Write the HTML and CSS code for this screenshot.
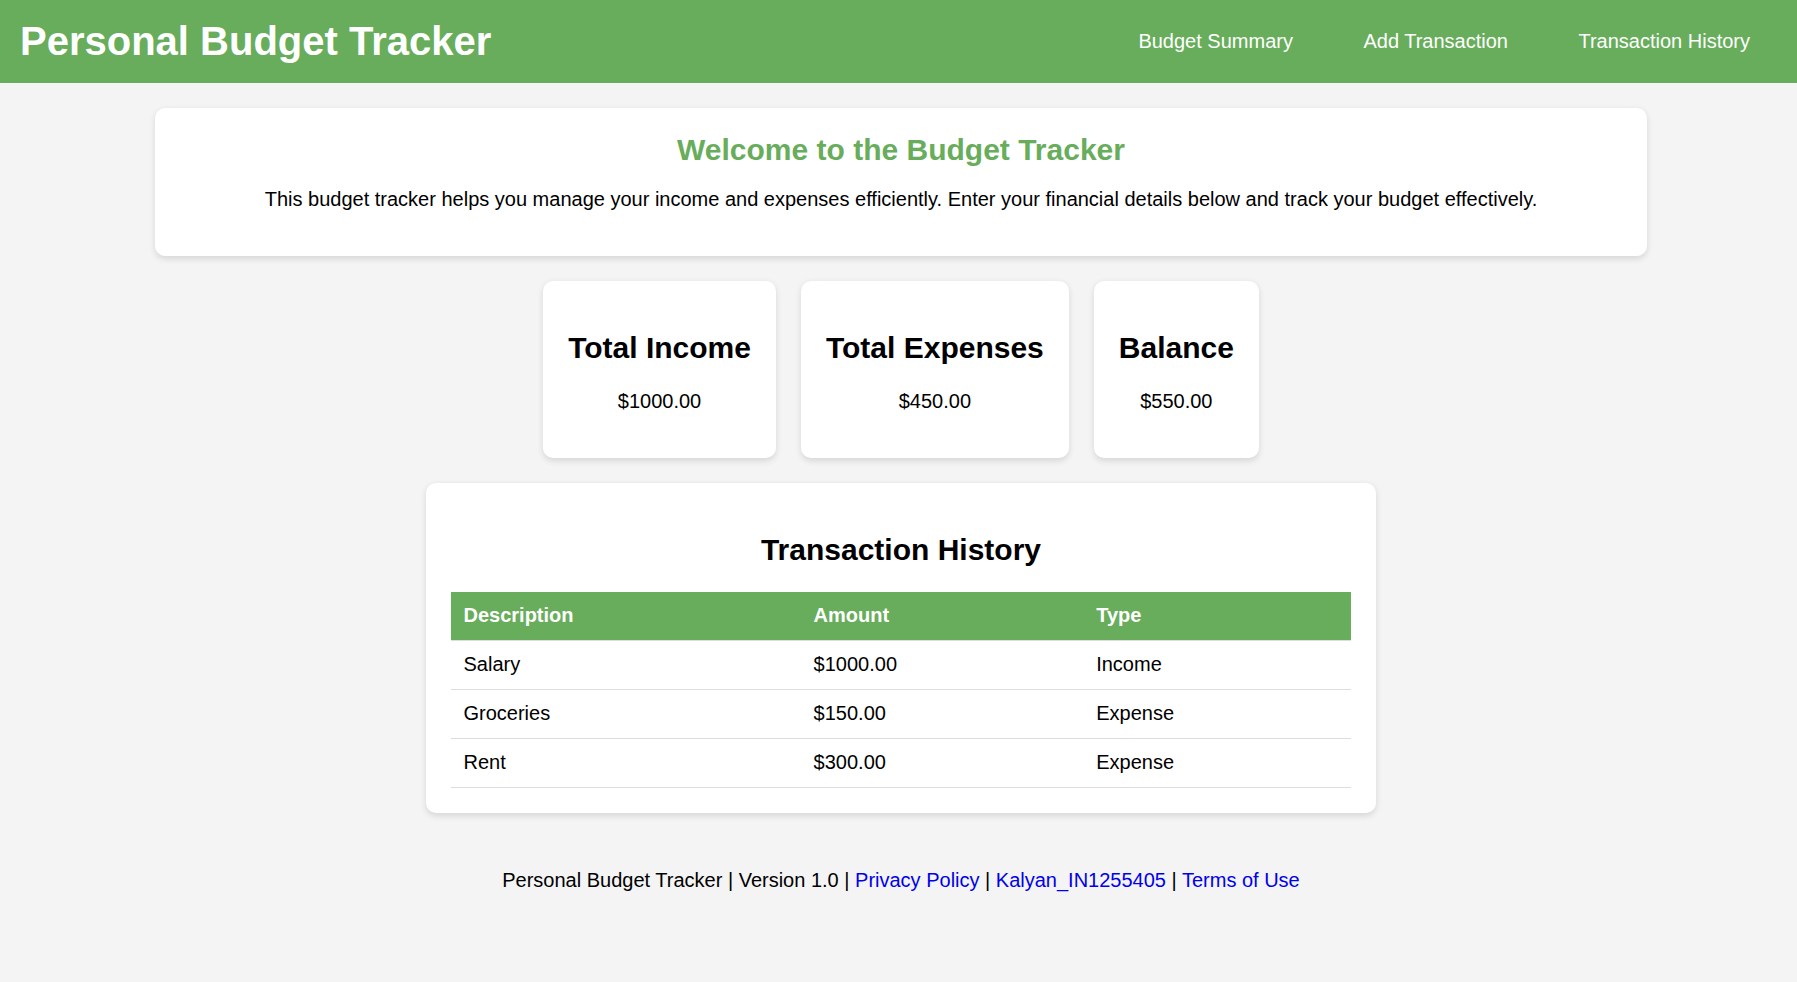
FILE: index.html
```html
<!DOCTYPE html>
<html lang="en">
<head>
<meta charset="utf-8">
<title>Personal Budget Tracker</title>
<link rel="stylesheet" href="styles.css">
</head>
<body>
<header class="site-header">
  <h1 class="site-title">Personal Budget Tracker</h1>
  <nav class="site-nav">
    <a href="#summary" class="nav-link">Budget Summary</a>
    <a href="#add" class="nav-link">Add Transaction</a>
    <a href="#history" class="nav-link">Transaction History</a>
  </nav>
</header>

<main class="container">
  <section class="card intro">
    <h2 class="intro-title">Welcome to the Budget Tracker</h2>
    <p class="intro-text">This budget tracker helps you manage your income and expenses efficiently. Enter your financial details below and track your budget effectively.</p>
  </section>

  <section class="summary" id="summary">
    <div class="card stat">
      <h2 class="stat-title">Total Income</h2>
      <p class="stat-value">$1000.00</p>
    </div>
    <div class="card stat">
      <h2 class="stat-title">Total Expenses</h2>
      <p class="stat-value">$450.00</p>
    </div>
    <div class="card stat">
      <h2 class="stat-title">Balance</h2>
      <p class="stat-value">$550.00</p>
    </div>
  </section>

  <section class="card history" id="history">
    <h2 class="history-title">Transaction History</h2>
    <table class="tx-table">
      <thead>
        <tr>
          <th class="col-desc">Description</th>
          <th class="col-amount">Amount</th>
          <th class="col-type">Type</th>
        </tr>
      </thead>
      <tbody>
        <tr><td>Salary</td><td>$1000.00</td><td>Income</td></tr>
        <tr><td>Groceries</td><td>$150.00</td><td>Expense</td></tr>
        <tr><td>Rent</td><td>$300.00</td><td>Expense</td></tr>
      </tbody>
    </table>
  </section>
</main>

<footer class="site-footer">
  <p class="footer-text">Personal Budget Tracker | Version 1.0 | <a href="#" class="footer-link">Privacy Policy</a> | <a href="#" class="footer-link">Kalyan_IN1255405</a> | <a href="#" class="footer-link">Terms of Use</a></p>
</footer>
</body>
</html>
```

FILE: styles.css
```css
html, body {
  margin: 0;
  padding: 0;
}

body {
  background: #f4f4f4;
  color: #000;
  font-family: "Liberation Sans", Arial, sans-serif;
  font-size: 20px;
  line-height: 23px;
}

/* Header */
.site-header {
  display: flex;
  align-items: center;
  justify-content: space-between;
  background: #67ad5b;
  color: #fff;
  padding: 18px 47px 19px 20px;
}

.site-title {
  margin: 0;
  font-size: 40px;
  line-height: 46px;
  font-weight: bold;
}

.site-nav {
  display: flex;
  gap: 70.5px;
}

.nav-link {
  color: #fff;
  text-decoration: none;
  font-size: 20px;
  line-height: 23px;
}

/* Main layout */
.container {
  display: flex;
  flex-direction: column;
  align-items: center;
  gap: 25px;
  padding: 25px 0 0 5px;
}

.card {
  background: #fff;
  border-radius: 10px;
  box-shadow: 0 2.5px 6px rgba(0, 0, 0, 0.12);
  padding: 25px;
  box-sizing: border-box;
}

/* Intro */
.intro {
  width: 1492px;
  text-align: center;
}

.intro-title {
  margin: 0 0 20px;
  color: #67ad5b;
  font-size: 30px;
  line-height: 34.5px;
}

.intro-text {
  margin: 0 0 20px;
}

/* Summary */
.summary {
  display: flex;
  justify-content: center;
  gap: 25px;
}

.stat {
  text-align: center;
}

.stat-title {
  margin: 25px 0;
  font-size: 30px;
  line-height: 34.5px;
}

.stat-value {
  margin: 20px 0;
}

/* History */
.history {
  width: 950px;
}

.history-title {
  margin: 25px 0 24px;
  text-align: center;
  font-size: 30px;
  line-height: 34.5px;
}

.tx-table {
  width: 100%;
  border-collapse: collapse;
}

.tx-table th,
.tx-table td {
  padding: 12.5px;
  text-align: left;
  border-bottom: 1px solid #ddd;
}

.tx-table th {
  background: #67ad5b;
  color: #fff;
  font-weight: bold;
}

.col-desc { width: 38.9%; }
.col-amount { width: 31.4%; }
.col-type { width: 29.7%; }

/* Footer */
.site-footer {
  text-align: center;
  padding: 56px 0 40px 5px;
}

.footer-text {
  margin: 0;
}

.footer-link {
  color: #0000ee;
  text-decoration: none;
}
```
